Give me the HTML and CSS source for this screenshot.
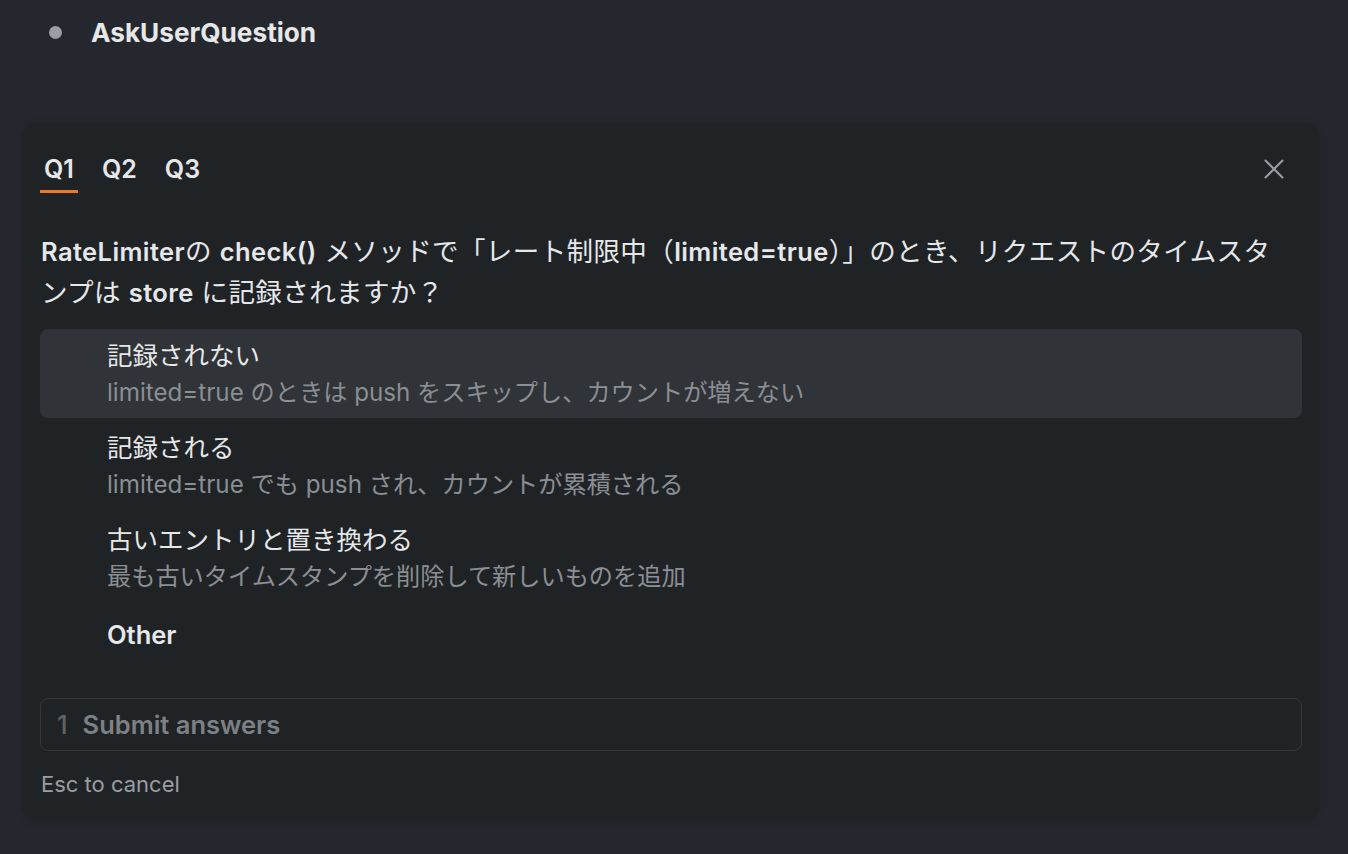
FILE: index.html
```html
<!DOCTYPE html>
<html lang="ja">
<head>
    <meta charset="UTF-8">
    <meta name="viewport" content="width=device-width, initial-scale=1.0">
    <title>AskUserQuestion</title>
    <link rel="stylesheet" href="styles.css">
</head>
<body>
    <div class="tool-header">
        <span class="status-dot"></span>
        <span class="tool-name">AskUserQuestion</span>
    </div>

    <div class="question-panel">
        <div class="panel-top">
            <div class="tabs">
                <button class="tab active">Q1</button>
                <button class="tab">Q2</button>
                <button class="tab">Q3</button>
            </div>
            <button class="close-btn" aria-label="Close">
                <svg width="20" height="20" viewBox="0 0 20 20">
                    <path d="M1.5 1.5 L18.5 18.5 M18.5 1.5 L1.5 18.5" stroke="currentColor" stroke-width="2" stroke-linecap="round"/>
                </svg>
            </button>
        </div>

        <p class="question">
            <strong>RateLimiter</strong>の <strong>check()</strong> メソッドで「レート制限中（<strong>limited=true</strong>）」のとき、リクエストのタイムスタンプは <strong>store</strong> に記録されますか？
        </p>

        <ul class="options">
            <li class="option selected">
                <div class="option-label">記録されない</div>
                <div class="option-desc">limited=true のときは push をスキップし、カウントが増えない</div>
            </li>
            <li class="option">
                <div class="option-label">記録される</div>
                <div class="option-desc">limited=true でも push され、カウントが累積される</div>
            </li>
            <li class="option">
                <div class="option-label">古いエントリと置き換わる</div>
                <div class="option-desc">最も古いタイムスタンプを削除して新しいものを追加</div>
            </li>
            <li class="option other">
                <div class="option-label">Other</div>
            </li>
        </ul>

        <div class="submit-row">
            <span class="submit-num">1</span>
            <span class="submit-text">Submit answers</span>
        </div>

        <div class="hint">Esc to cancel</div>
    </div>
</body>
</html>
```

FILE: styles.css
```css
:root {
    --page-bg: #25272e;
    --panel-bg: #202326;
    --row-hover: #303337;
    --text: #e6e7e9;
    --muted: #8b8e93;
    --accent: #f27a1c;
}

body {
    margin: 0;
    background: var(--page-bg);
    color: var(--text);
    font-family: "Inter", "Noto Sans CJK JP", sans-serif;
    min-height: 100vh;
}

.tool-header {
    display: flex;
    align-items: center;
    height: 65px;
    padding-left: 49px;
    gap: 29px;
}

.status-dot {
    width: 13px;
    height: 13px;
    border-radius: 50%;
    background: #9b9ea3;
}

.tool-name {
    font-size: 26.2px;
    font-weight: 700;
}

.question-panel {
    margin: 58px 28px 0 22px;
    background: var(--panel-bg);
    border-radius: 14px;
    padding: 24px 18px 22px;
    box-shadow: 0 2px 8px rgba(0, 0, 0, 0.15);
}

.panel-top {
    display: flex;
    justify-content: space-between;
    align-items: flex-start;
}

.tabs {
    display: flex;
    gap: 20px;
}

.tab {
    background: none;
    border: none;
    color: var(--text);
    font-family: inherit;
    font-size: 25px;
    font-weight: 600;
    padding: 7px 4px 6px;
    line-height: 30px;
    border-bottom: 3px solid transparent;
    cursor: pointer;
}

.tab.active {
    border-bottom-color: var(--accent);
}

.close-btn {
    background: none;
    border: none;
    color: #9a9da1;
    padding: 0;
    margin: 12px 18px 0 0;
    width: 20px;
    height: 20px;
    cursor: pointer;
}

.question {
    margin: 38px 0 16px;
    padding: 0 20px 0 1px;
    font-size: 26.5px;
    letter-spacing: 0.4px;
    line-height: 41px;
    font-weight: 400;
}

.question strong {
    font-size: 25.5px;
    font-weight: 600;
}

.options {
    list-style: none;
    margin: 0;
    padding: 0;
    display: flex;
    flex-direction: column;
    gap: 3px;
}

.option {
    padding: 9px 0 6px 67px;
    border-radius: 8px;
}

.option.selected {
    background: var(--row-hover);
}

.option-label {
    font-size: 25.5px;
    line-height: 36px;
}

.option-desc {
    font-size: 24.2px;
    line-height: 38px;
    color: var(--muted);
}

.option.other {
    padding-top: 12px;
}

.option.other .option-label {
    font-weight: 600;
}

.submit-row {
    margin-top: 39px;
    height: 51px;
    border: 1px solid #34373b;
    border-radius: 8px;
    display: flex;
    align-items: center;
    padding-left: 16px;
    gap: 15px;
    font-size: 25.5px;
    font-weight: 600;
}

.submit-num {
    color: #5f6368;
    font-weight: 500;
}

.submit-text {
    color: #7d8085;
}

.hint {
    margin-top: 20px;
    font-size: 22px;
    line-height: 26px;
    color: #9a9da1;
    padding-left: 1px;
}
```
